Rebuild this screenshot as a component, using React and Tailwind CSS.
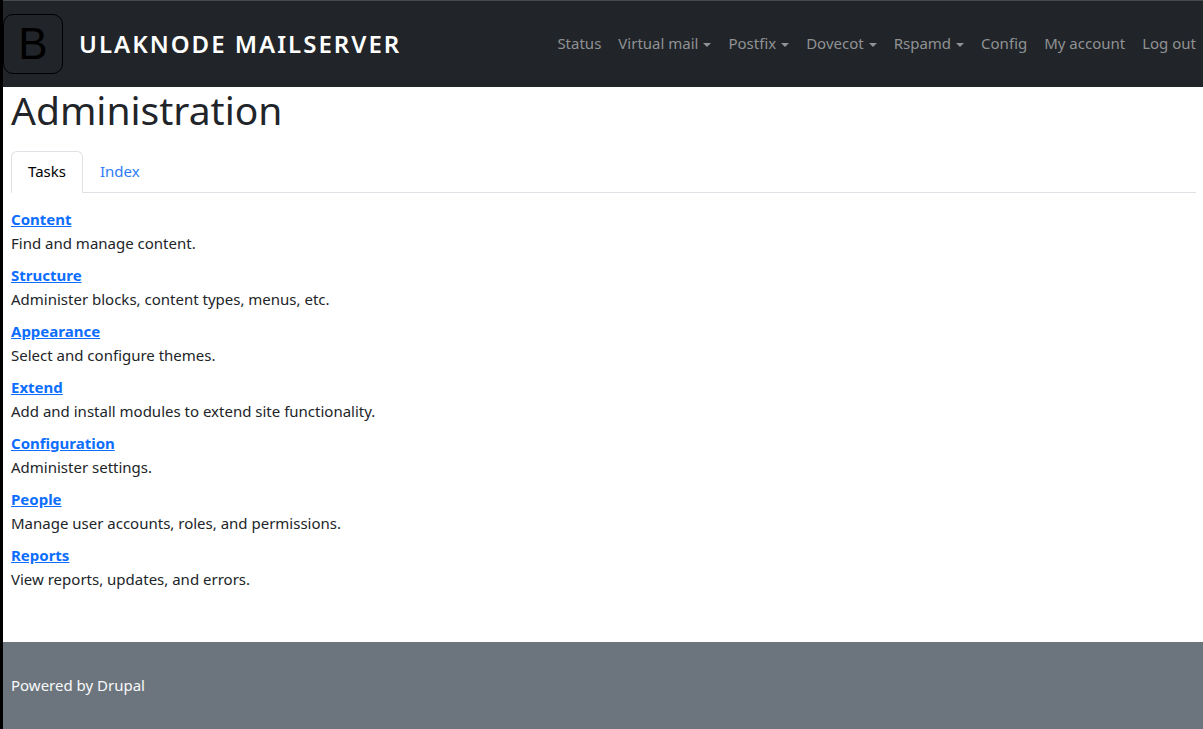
const menu = [
  { label: 'Status' },
  { label: 'Virtual mail', dropdown: true },
  { label: 'Postfix', dropdown: true },
  { label: 'Dovecot', dropdown: true },
  { label: 'Rspamd', dropdown: true },
  { label: 'Config' },
  { label: 'My account' },
  { label: 'Log out' },
];

const sections = [
  ['Content', 'Find and manage content.'],
  ['Structure', 'Administer blocks, content types, menus, etc.'],
  ['Appearance', 'Select and configure themes.'],
  ['Extend', 'Add and install modules to extend site functionality.'],
  ['Configuration', 'Administer settings.'],
  ['People', 'Manage user accounts, roles, and permissions.'],
  ['Reports', 'View reports, updates, and errors.'],
];

function Caret() {
  return (
    <svg className="mt-1 ml-[5px] h-1 w-2" viewBox="0 0 8 4" fill="currentColor" aria-hidden="true">
      <path d="M0 0h8L4 4z" />
    </svg>
  );
}

function MenuItem({ label, dropdown }) {
  if (dropdown) {
    return (
      <button type="button" aria-haspopup="true" className="flex items-center whitespace-nowrap">
        {label}
        <Caret />
      </button>
    );
  }
  return (
    <a href="#" className="whitespace-nowrap">
      {label}
    </a>
  );
}

function Header() {
  return (
    <header className="flex flex-wrap items-center justify-between border-t border-[#454a4a] bg-[#212529] py-[13px] pr-[7px]">
      <a href="#" className="flex items-center gap-4 text-white">
        <span className="flex size-15 items-center justify-center rounded-[10px] border border-black font-['Liberation_Sans',sans-serif] text-[44px] leading-none text-black">
          B
        </span>
        <span className="text-[24px] font-semibold tracking-[2px] uppercase">Ulaknode Mailserver</span>
      </a>
      <nav aria-label="Main navigation" className="pb-0.5">
        <ul className="flex flex-wrap gap-[17px] text-[#909294]">
          {menu.map((item) => (
            <li key={item.label}>
              <MenuItem {...item} />
            </li>
          ))}
        </ul>
      </nav>
    </header>
  );
}

function Tabs() {
  return (
    <nav aria-label="Tabs" className="flex border-b border-[#dee2e6]">
      <a
        href="#"
        aria-current="page"
        className="-mb-px rounded-t-md border border-b-0 border-[#dee2e6] bg-white px-4 pt-[7px] pb-[10px] text-black"
      >
        Tasks
      </a>
      <a href="#" className="-mb-px border border-b-0 border-transparent px-4 pt-[7px] pb-[10px] text-[#2f7cf8]">
        Index
      </a>
    </nav>
  );
}

export default function App() {
  return (
    <div className="flex min-h-screen flex-col border-l-3 border-black bg-white font-['Noto_Sans',sans-serif] text-[15px] leading-6 text-[#212529]">
      <Header />
      <main className="grow pr-[7px] pb-[43px] pl-2">
        <h1 className="mb-[18px] text-[39px] leading-[46px]">Administration</h1>
        <Tabs />
        <dl className="mt-[14px]">
          {sections.map(([title, description]) => (
            <div key={title} className="mb-2">
              <dt className="font-bold">
                <a href="#" className="text-[#0d6efd] underline">
                  {title}
                </a>
              </dt>
              <dd>{description}</dd>
            </div>
          ))}
        </dl>
      </main>
      <footer className="bg-[#6c757d] px-2 pt-[31px] pb-8 text-[#f8f9fa]">
        <p>
          Powered by <a href="#">Drupal</a>
        </p>
      </footer>
    </div>
  );
}
